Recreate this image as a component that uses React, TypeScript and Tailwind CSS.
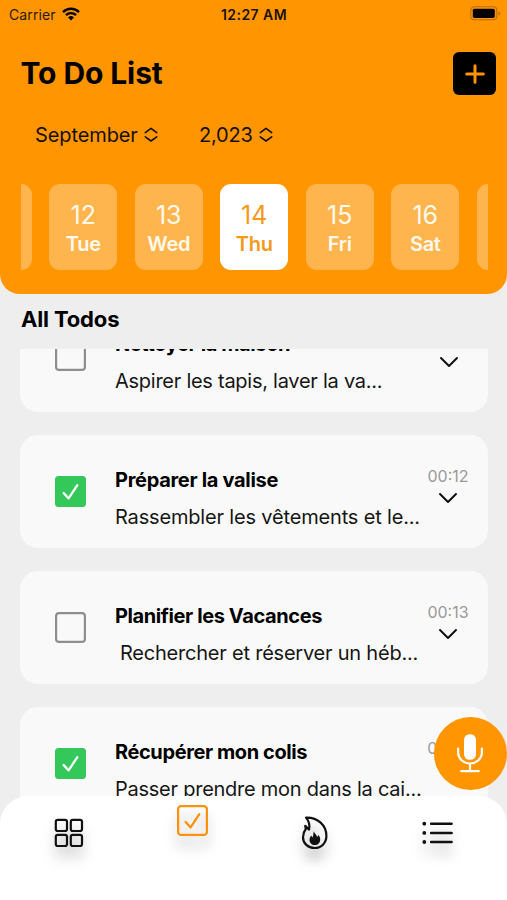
import React from "react";

const days = [
  { n: "12", d: "Tue" },
  { n: "13", d: "Wed" },
  { n: "14", d: "Thu", active: true },
  { n: "15", d: "Fri" },
  { n: "16", d: "Sat" },
];

type Todo = {
  title: string;
  text: string;
  time: string;
  done: boolean;
  titleClass: string;
  textClass: string;
};

const todos: Todo[] = [
  { title: "Nettoyer la maison", text: "Aspirer les tapis, laver la va...", time: "", done: false, titleClass: "tracking-[-0.4px]", textClass: "tracking-[-0.26px]" },
  { title: "Préparer la valise", text: "Rassembler les vêtements et le...", time: "00:12", done: true, titleClass: "tracking-[-0.3px]", textClass: "tracking-[-0.17px]" },
  { title: "Planifier les Vacances", text: "Rechercher et réserver un héb...", time: "00:13", done: false, titleClass: "tracking-[-0.4px]", textClass: "pl-[5px] tracking-[-0.22px]" },
  { title: "Récupérer mon colis", text: "Passer prendre mon dans la cai...", time: "00:14", done: true, titleClass: "tracking-[-0.4px]", textClass: "tracking-[-0.25px]" },
];

function UpDown() {
  return (
    <svg className="h-4 w-[14px]" viewBox="0 0 14 16" fill="none" stroke="currentColor" strokeWidth="1.6" strokeLinecap="round" strokeLinejoin="round">
      <path d="M1.3 5.6 7 1.4l5.7 4.2M1.3 9.8 7 14l5.7-4.2" />
    </svg>
  );
}

function TodoCard({ todo }: { todo: Todo }) {
  return (
    <div className="flex h-[113.5px] shrink-0 rounded-[18px] bg-[#f9f9f9] pl-[35px]">
      <div className="mt-[41.5px] h-[31px] w-[31px] shrink-0">
        {todo.done ? (
          <svg viewBox="0 0 31 31" className="h-[31px] w-[31px]" fill="none">
            <rect width="31" height="31" rx="3.5" fill="#34c759" />
            <path d="m8.6 17 5 5.4 8.7-13.3" stroke="#fff" strokeWidth="2.3" strokeLinecap="round" strokeLinejoin="round" />
          </svg>
        ) : (
          <svg viewBox="0 0 31 31" className="h-[31px] w-[31px]" fill="none">
            <rect x="1.1" y="1.1" width="28.8" height="28.8" rx="3" stroke="#8e8e8e" strokeWidth="2.2" />
          </svg>
        )}
      </div>
      <div className="ml-[29px] w-[312px] shrink-0 whitespace-nowrap">
        <div className={`mt-[33px] text-[20px] leading-6 font-bold ${todo.titleClass}`}>{todo.title}</div>
        <div className={`mt-[13px] text-[20px] leading-6 text-[#161616] ${todo.textClass}`}>{todo.text}</div>
      </div>
      <div className={`flex w-[42px] shrink-0 flex-col items-center ${todo.time ? "" : "pl-[2px]"}`}>
        <div className="mt-[31px] h-5 text-[16px] leading-5 text-[#999]">{todo.time}</div>
        <svg className="mt-[6px] h-3 w-5" viewBox="0 0 20 12" fill="none" stroke="#111" strokeWidth="2" strokeLinecap="round" strokeLinejoin="round">
          <path d="m2 2 8 8 8-8" />
        </svg>
      </div>
    </div>
  );
}

export default function App() {
  return (
    <div className="relative flex h-[900px] w-[507px] flex-col overflow-hidden bg-[#eeeeee] font-['Inter','Liberation_Sans',sans-serif] text-black">
      <header className="h-[294px] shrink-0 rounded-b-[20px] bg-[#ff9500]">
        <div className="grid h-7 grid-cols-3 items-center pr-[6px] pl-[9px] text-[14px]">
          <div className="flex items-center gap-[6px] text-[#2a1a00]">
            <span className="tracking-[0.1px]">Carrier</span>
            <svg className="h-[14px] w-[18px] text-black" viewBox="0 0 18 14" fill="none" stroke="currentColor" strokeWidth="2.4">
              <path d="M1 5.1a11.4 11.4 0 0 1 16 0M3.9 8.2a7.3 7.3 0 0 1 10.2 0" />
              <path d="m9 13.4-2.9-2.9a4.1 4.1 0 0 1 5.8 0Z" fill="currentColor" stroke="none" />
            </svg>
          </div>
          <div className="-ml-[2px] text-center text-[14px] font-semibold tracking-[0.45px] text-[#1c1000]">12:27 AM</div>
          <svg className="-mt-[2px] h-[15px] w-[31px] justify-self-end" viewBox="0 0 31 15" fill="none">
            <rect x="0.8" y="0.8" width="26" height="13" rx="3.5" stroke="#b96c00" strokeWidth="1.1" />
            <rect x="2.8" y="2.7" width="22" height="9.2" rx="1.6" fill="#000" />
            <path d="M28.5 5.2v4.4q1.7-.8 1.7-2.2t-1.7-2.2" fill="#b96c00" />
          </svg>
        </div>
        <div className="mt-6 flex h-[43px] items-center justify-between pr-[11px] pl-[20.5px]">
          <h1 className="text-[30px] leading-[43px] font-bold tracking-[-0.1px]">To Do List</h1>
          <button className="flex h-[43px] w-[43px] items-center justify-center rounded-[6px] bg-black">
            <svg className="h-5 w-5" viewBox="0 0 20 20" stroke="#ff9500" strokeWidth="3" strokeLinecap="round">
              <path d="M10 1.7v16.6M1.7 10h16.6" />
            </svg>
          </button>
        </div>
        <div className="mt-[28px] flex h-6 items-center pl-[35px] text-[20px] text-[#171000]">
          <div className="flex w-[164px] items-center gap-[6px]"><span className="tracking-[-0.1px]">September</span><UpDown /></div>
          <div className="flex items-center gap-[6px]"><span className="tracking-[-0.2px]">2,023</span><UpDown /></div>
        </div>
        <div className="mt-[37px] ml-[20.5px] flex h-[86px] w-[467.5px] justify-center gap-[17.5px] overflow-hidden">
          <div className="w-[68px] shrink-0 rounded-[11px] bg-[#ffb54d]" />
          {days.map((x) => (
            <div key={x.n} className={`flex w-[68px] shrink-0 flex-col items-center rounded-[11px] pt-[17px] ${x.active ? "bg-white text-[#f39a1c]" : "bg-[#ffb54d] text-[#fff9ee]"}`}>
              <span className="text-[25px] leading-[28px]">{x.n}</span>
              <span className="pt-px text-[20px] leading-[28px] font-semibold tracking-[-0.3px]">{x.d}</span>
            </div>
          ))}
          <div className="w-[68px] shrink-0 rounded-[11px] bg-[#ffb54d]" />
        </div>
      </header>
      <h2 className="h-[55px] shrink-0 pl-[21px] text-[22px] leading-[50px] font-bold tracking-[-0.15px]">All Todos</h2>
      <main className="mr-[19px] ml-[20px] flex h-[475px] shrink-0 flex-col overflow-hidden">
        <div className="-mt-[50.5px] flex flex-col gap-[22.5px]">
          {todos.map((t) => <TodoCard key={t.title} todo={t} />)}
        </div>
      </main>
      <nav className="relative -mt-[28px] h-[104px] shrink-0 rounded-t-[28px] bg-white">
        <div className="flex items-start justify-between pr-[54px] pl-[54px]">
          <svg className="mt-[22px] h-[30px] w-[30px] drop-shadow-[0_11px_6px_rgba(0,0,0,0.28)]" viewBox="0 0 30 30" fill="none" stroke="#111" strokeWidth="2.2">
            <rect x="1.8" y="1.8" width="11.2" height="11.2" rx="2" />
            <rect x="16.8" y="1.8" width="11.2" height="11.2" rx="2" />
            <rect x="1.8" y="16.8" width="11.2" height="11.2" rx="2" />
            <rect x="16.8" y="16.8" width="11.2" height="11.2" rx="2" />
          </svg>
          <svg className="mt-[9px] h-[31px] w-[31px] drop-shadow-[0_11px_6px_rgba(0,0,0,0.28)]" viewBox="0 0 31 31" fill="none" stroke="#f9930f" strokeWidth="2.3" strokeLinecap="round" strokeLinejoin="round">
            <rect x="1.1" y="1.1" width="28.8" height="28.8" rx="3" />
            <path d="m8.6 17 5 5.4 8.7-13.3" />
          </svg>
          <svg className="mt-[20px] h-[34px] w-[28px] drop-shadow-[0_11px_6px_rgba(0,0,0,0.28)]" viewBox="0 0 28 34" fill="none">
            <path d="M5 1.6C16.8 1.2 25.4 9.2 25.4 19.8c0 7.4-5.2 12.2-11.8 12.2C6.9 32 2 27.4 2 21.2c0-3.9 1.2-6.1 2.8-8.2L4.2 9.8 8.1 13.6C9 9.4 7.9 5 5 1.6Z" stroke="#111" strokeWidth="2.2" strokeLinejoin="round" />
            <path d="M12.9 15.2c.2 2.5 2.9 3.1 3.1 5.6 1-.4 1.3-1.2 1.3-2.1 1.3 1.5 1.9 3.1 1.9 4.7 0 3.4-2.3 5.6-5.4 5.6-3 0-5.3-2.1-5.3-5 0-2.1.9-3.3 2-4.4 0 .9.4 1.5 1 1.8 1.2-1.7.4-3.9 1.4-6.2Z" fill="#111" />
          </svg>
          <svg className="mt-[24px] h-[26px] w-[31px] drop-shadow-[0_11px_6px_rgba(0,0,0,0.28)]" viewBox="0 0 31 26" stroke="#111" strokeWidth="2.5" strokeLinecap="round">
            <path d="M9.1 3.7h20.5M9.1 12.9h20.5M9.1 22h20.5" />
            <path d="M2.3 3.7h.01M2.3 12.9h.01M2.3 22h.01" strokeWidth="3.8" />
          </svg>
        </div>
      </nav>
      <button className="absolute top-[716.5px] left-[433.5px] flex h-[73.5px] w-[73.5px] items-center justify-center rounded-full bg-[#ff9500]">
        <svg className="h-10 w-[28px]" viewBox="0 0 28 40" fill="none" stroke="#fff" strokeWidth="2.2" strokeLinecap="round">
          <rect x="8" y="1.2" width="12" height="25.6" rx="5.5" fill="#fff" stroke="none" />
          <path d="M2.1 15.5v3.7a11.9 11.3 0 0 0 23.8 0v-3.7M14 31v7M5.3 38.2h17.4" />
        </svg>
      </button>
    </div>
  );
}
